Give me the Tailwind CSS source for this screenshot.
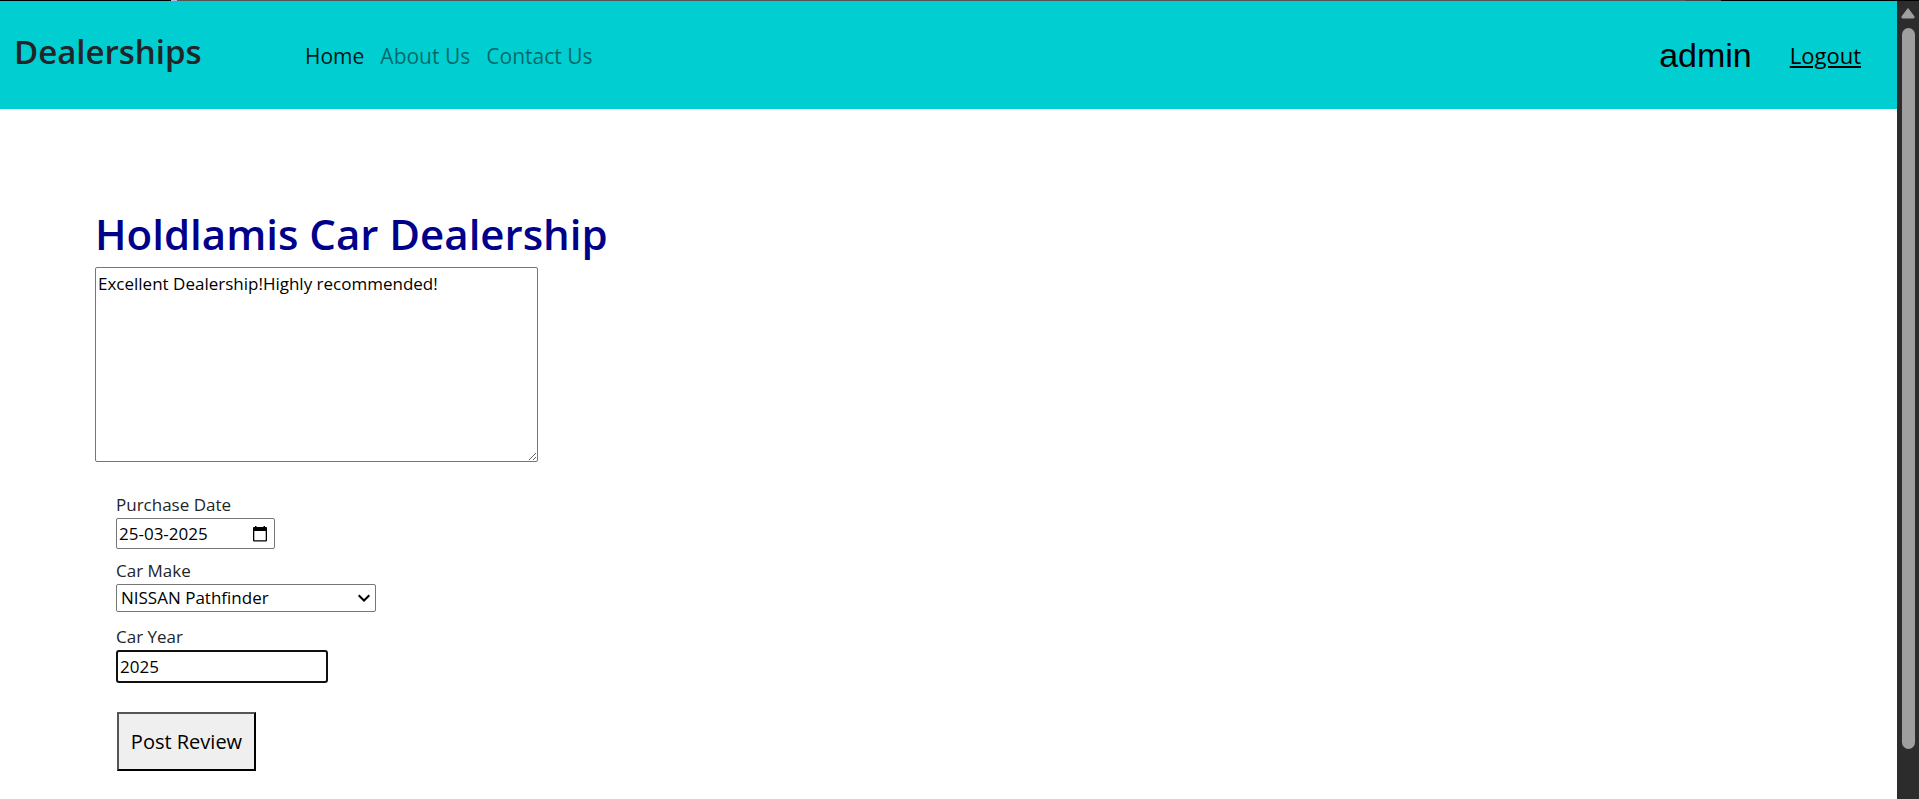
<!DOCTYPE html>
<html lang="en">
<head>
<meta charset="utf-8">
<title>Dealerships</title>
<script src="https://cdn.jsdelivr.net/npm/@tailwindcss/browser@4"></script>
</head>
<body class="h-screen overflow-hidden flex flex-col bg-white text-[#212529] font-['Open_Sans','Noto_Sans',sans-serif]">
  <div class="h-px shrink-0 flex bg-black">
    <div class="w-[8.9%]"></div>
    <div class="w-1.5 bg-[#b0b8f0]"></div>
    <div class="w-[78.6%] bg-[#555555]"></div>
    <div class="w-9 bg-[#444444]"></div>
  </div>
  <div class="flex flex-1 min-h-0">
    <div class="flex-1 min-w-0">
      <header class="h-27 flex items-center bg-[#00ced1] pl-3.5 pr-9">
        <h2 class="w-[291px] pb-1.5 text-[33px] leading-10 font-semibold">Dealerships</h2>
        <nav class="flex gap-4 pt-0.5 text-[21px] leading-8">
          <a href="#" class="text-black/90">Home</a>
          <a href="#" class="text-black/50">About Us</a>
          <a href="#" class="text-black/50">Contact Us</a>
        </nav>
        <div class="ml-auto flex items-center gap-[38px] text-black">
          <span class="text-[34px] leading-10 font-['Liberation_Sans',sans-serif]">admin</span>
          <a href="#" class="text-[22px] leading-8 underline">Logout</a>
        </div>
      </header>
      <main class="pl-[95px] pt-[97px]">
        <h1 class="text-[42px] leading-14 font-semibold text-[#00008b]">Holdlamis Car Dealership</h1>
        <form class="pt-[5px]">
          <textarea aria-label="Review" class="block w-[443px] h-[195px] resize rounded-xs border border-[#767676] px-0.5 py-0.5 text-[17px] leading-7 text-black">Excellent Dealership!Highly recommended!</textarea>
          <div class="pl-[21px] pt-8 text-[17px]">
            <div class="h-[66px]">
              <label for="date" class="block h-6 leading-[22px]">Purchase Date</label>
              <div class="flex items-center w-[159px] h-[31px] rounded-xs border border-[#767676] pl-0.5 pr-1.5">
                <input id="date" type="text" value="25-03-2025" class="min-w-0 flex-1 text-black">
                <button type="button" aria-label="Choose date" class="shrink-0">
                  <svg class="w-4 h-4" viewBox="0 0 16 16"><path d="M3 0h1.500v1h7V0H13v1h1a1 1 0 0 1 1 1V14.500a1 1 0 0 1-1 1H2a1 1 0 0 1-1-1V2a1 1 0 0 1 1-1h1zM2.300 5v9.200h11.400V5z" fill="#000" fill-rule="evenodd"/></svg>
                </button>
              </div>
            </div>
            <div class="h-[66px]">
              <label for="make" class="block h-6 leading-[22px]">Car Make</label>
              <div class="grid items-center w-[260px]">
                <select id="make" class="col-start-1 row-start-1 appearance-none w-full h-7 rounded-xs border border-[#767676] bg-white pl-1 text-black">
                  <option>NISSAN Pathfinder</option>
                </select>
                <svg class="col-start-1 row-start-1 justify-self-end mr-1.5 w-3 h-3 pointer-events-none" viewBox="0 0 12 12" fill="none" stroke="#000" stroke-width="2"><path d="M0.700 3.300 6 8.500l5.300-5.200"/></svg>
              </div>
            </div>
            <div class="h-[66px]">
              <label for="year" class="block h-6 leading-[22px]">Car Year</label>
              <input id="year" type="text" value="2025" class="block w-[212px] h-[33px] rounded-[3px] border-2 border-[#101010] px-0.5 text-black">
            </div>
            <button type="button" class="ml-px mt-5 h-[59px] w-[139px] border-2 border-t-[#555555] border-l-[#555555] border-black bg-[#efefef] text-[20px] text-black whitespace-nowrap">Post Review</button>
          </div>
        </form>
      </main>
    </div>
    <div aria-hidden="true" class="w-[22px] shrink-0 flex flex-col items-center bg-[#2c2c2c] pt-1.5">
      <svg class="w-4 h-3" viewBox="0 0 16 12"><path d="M8 1.500 14 9.500Q14.500 11 13.500 11h-11Q1.500 11 2 9.500z" fill="#9f9f9f" stroke="#9f9f9f" stroke-linejoin="round"/></svg>
      <div class="mt-[9px] w-[13px] h-[91%] rounded-full bg-[#9f9f9f]"></div>
    </div>
  </div>
</body>
</html>
